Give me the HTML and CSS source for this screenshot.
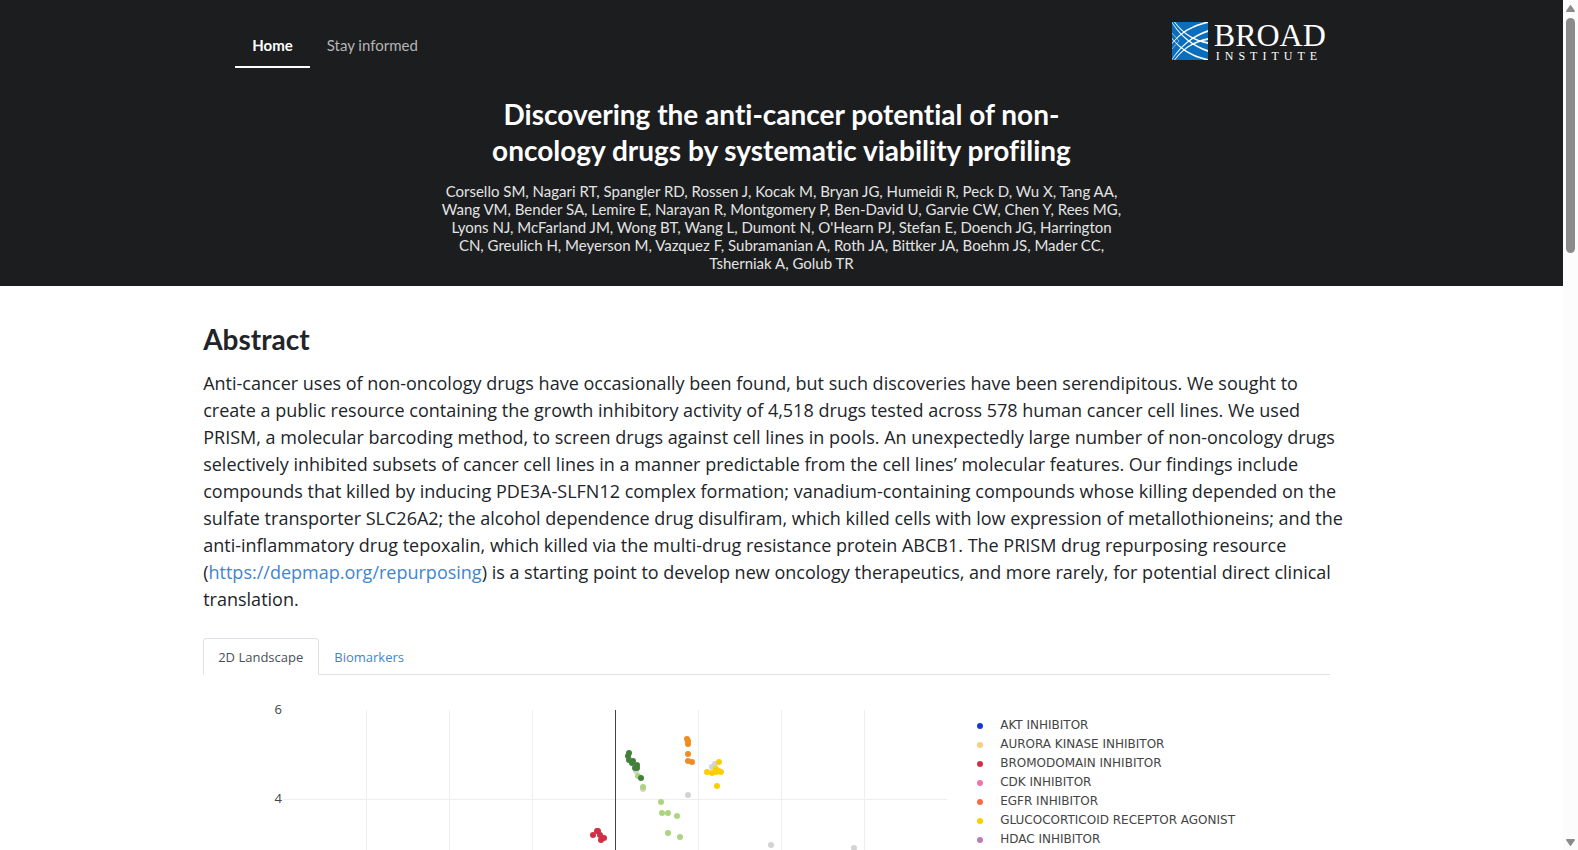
FILE: index.html
```html
<!DOCTYPE html>
<html lang="en">
<head>
    <meta charset="UTF-8">
    <title>Discovering the anti-cancer potential of non-oncology drugs</title>
    <link rel="stylesheet" href="styles.css">
</head>
<body>
    <div class="page">
        <header class="header">
            <div class="top-bar">
                <nav class="nav">
                    <a class="nav-link active" href="#">Home</a>
                    <a class="nav-link" href="#informed">Stay informed</a>
                </nav>
                <a class="logo" href="#" aria-label="Broad Institute">
                    <svg width="36" height="38" viewBox="0 0 36 38">
                        <rect width="36" height="38" fill="#0a6ebd"/>
                        <g fill="#fff">
                            <path d="M0 0Q14 21 36 28V30Q13 22 0 1Z"/>
                            <path d="M0 38Q14 17 36 10V8Q13 16 0 37Z"/>
                            <path d="M0 22Q13 6 36 1V0H33Q12 5 0 21Z"/>
                            <path d="M0 16Q13 32 36 37V38H33Q12 33 0 17Z"/>
                            <path d="M3 38Q16 21 36 18V16Q15 20 2 38Z"/>
                            <path d="M3 0Q16 17 36 20V22Q15 18 2 0Z"/>
                        </g>
                        <path d="M0 11L7 19L0 27" fill="none" stroke="#fff" opacity="0.5"/>
                    </svg>
                    <span class="logo-text">
                        <span class="logo-name">BROAD</span>
                        <span class="logo-sub">INSTITUTE</span>
                    </span>
                </a>
            </div>
            <div class="intro">
                <h1>Discovering the anti-cancer potential of non-oncology drugs by systematic viability profiling</h1>
                <p>
                    Corsello SM, Nagari RT, Spangler RD, Rossen J, Kocak M, Bryan JG, Humeidi R, Peck D, Wu X, Tang AA,<br>
                    Wang VM, Bender SA, Lemire E, Narayan R, Montgomery P, Ben-David U, Garvie CW, Chen Y, Rees MG,<br>
                    Lyons NJ, McFarland JM, Wong BT, Wang L, Dumont N, O'Hearn PJ, Stefan E, Doench JG, Harrington<br>
                    CN, Greulich H, Meyerson M, Vazquez F, Subramanian A, Roth JA, Bittker JA, Boehm JS, Mader CC,<br>
                    Tsherniak A, Golub TR
                </p>
            </div>
        </header>

        <main class="content">
            <h2>Abstract</h2>
            <p class="abstract">Anti-cancer uses of non-oncology drugs have occasionally been found, but such discoveries have been serendipitous. We sought to create a public resource containing the growth inhibitory activity of 4,518 drugs tested across 578 human cancer cell lines. We used PRISM, a molecular barcoding method, to screen drugs against cell lines in pools. An unexpectedly large number of non-oncology drugs selectively inhibited subsets of cancer cell lines in a manner predictable from the cell lines’ molecular features. Our findings include compounds that killed by inducing PDE3A-SLFN12 complex formation; vanadium-containing compounds whose killing depended on the sulfate transporter SLC26A2; the alcohol dependence drug disulfiram, which killed cells with low expression of metallothioneins; and the anti-inflammatory drug tepoxalin, which killed via the multi-drug resistance protein ABCB1. The PRISM drug repurposing resource (<a href="https://depmap.org/repurposing">https://depmap.org/repurposing</a>) is a starting point to develop new oncology therapeutics, and more rarely, for potential direct clinical translation.</p>

            <div class="tabs">
                <a class="tab active" href="#landscape">2D Landscape</a>
                <a class="tab" href="#biomarkers">Biomarkers</a>
            </div>

            <div class="chart" id="landscape">
                <svg class="plot" width="745" height="150" viewBox="0 0 745 150">
                    <!-- grid -->
                    <g stroke="#eee" shape-rendering="crispEdges">
                        <path d="M163.500 10V150M246.500 10V150M329.500 10V150M495.500 10V150M578.500 10V150M661.500 10V150"/>
                        <path d="M80 99.500H744"/>
                    </g>
                    <path d="M412.500 10V150" stroke="#444" shape-rendering="crispEdges"/>
                    <text class="tick" x="79" y="14">6</text>
                    <text class="tick" x="79" y="103">4</text>

                    <!-- other compounds -->
                    <g fill="#d3d3d3">
                        <circle cx="433" cy="71" r="3"/>
                        <circle cx="440" cy="89" r="3"/>
                        <circle cx="485" cy="95" r="3"/>
                        <circle cx="509" cy="67" r="3"/>
                        <circle cx="512" cy="64" r="3"/>
                        <circle cx="568" cy="145" r="3"/>
                        <circle cx="651" cy="148" r="3"/>
                    </g>
                    <g fill="#add57f">
                        <circle cx="435" cy="76" r="3"/>
                        <circle cx="440" cy="87" r="3"/>
                        <circle cx="458" cy="102" r="3"/>
                        <circle cx="459" cy="113" r="3"/>
                        <circle cx="465" cy="113" r="3"/>
                        <circle cx="474" cy="116" r="3"/>
                        <circle cx="465" cy="133" r="3"/>
                        <circle cx="477" cy="137" r="3"/>
                    </g>
                    <g fill="#43803b">
                        <circle cx="426" cy="53" r="3"/>
                        <circle cx="425" cy="56" r="3"/>
                        <circle cx="426" cy="60" r="3"/>
                        <circle cx="430" cy="61" r="3"/>
                        <circle cx="429" cy="63" r="3"/>
                        <circle cx="434" cy="65" r="3"/>
                        <circle cx="432" cy="68" r="3"/>
                        <circle cx="434" cy="68" r="3"/>
                        <circle cx="438" cy="78" r="3"/>
                    </g>
                    <g fill="#f08d22">
                        <circle cx="484" cy="39" r="3"/>
                        <circle cx="485" cy="41" r="3"/>
                        <circle cx="485" cy="44" r="3"/>
                        <circle cx="485" cy="54" r="3"/>
                        <circle cx="485" cy="61" r="3"/>
                        <circle cx="489" cy="62" r="3"/>
                    </g>
                    <g fill="#ffcd00">
                        <circle cx="516" cy="62" r="3"/>
                        <circle cx="504" cy="72" r="3"/>
                        <circle cx="509" cy="73" r="3"/>
                        <circle cx="513" cy="69" r="3"/>
                        <circle cx="513" cy="72" r="3"/>
                        <circle cx="516" cy="71" r="3"/>
                        <circle cx="518" cy="72" r="3"/>
                        <circle cx="514" cy="86" r="3"/>
                    </g>
                    <g fill="#d12f44">
                        <circle cx="390" cy="135" r="3"/>
                        <circle cx="394" cy="131" r="3"/>
                        <circle cx="395" cy="131" r="3"/>
                        <circle cx="397" cy="135" r="3"/>
                        <circle cx="398" cy="140" r="3"/>
                        <circle cx="401" cy="138" r="3"/>
                    </g>
                </svg>
                <ul class="legend">
                    <li class="akt">AKT INHIBITOR</li>
                    <li class="aurora">AURORA KINASE INHIBITOR</li>
                    <li class="bromodomain">BROMODOMAIN INHIBITOR</li>
                    <li class="cdk">CDK INHIBITOR</li>
                    <li class="egfr">EGFR INHIBITOR</li>
                    <li class="glucocorticoid">GLUCOCORTICOID RECEPTOR AGONIST</li>
                    <li class="hdac">HDAC INHIBITOR</li>
                </ul>
            </div>
        </main>
    </div>

    <div class="scrollbar">
        <svg width="9" height="7" viewBox="0 0 9 7"><path d="M4.500 0Q5 0 5.500 1L9 6Q9 7 8 7H1Q0 7 0 6L3.500 1Q4 0 4.500 0Z"/></svg>
        <div class="thumb"></div>
        <svg width="9" height="7" viewBox="0 0 9 7"><path d="M4.500 7Q5 7 5.500 6L9 1Q9 0 8 0H1Q0 0 0 1L3.500 6Q4 7 4.500 7Z"/></svg>
    </div>
</body>
</html>
```

FILE: styles.css
```css
body {
    display: flex;
    height: 100vh;
    margin: 0;
    overflow: hidden;
    background-color: #fff;
    color: #212529;
    font-family: "Open Sans", "Noto Sans", sans-serif;
}
.page {
    flex: 1;
    overflow: hidden;
}
a {
    color: #4285cd;
    text-decoration: none;
}

/* header */
.header {
    background-color: #1c1d1f;
    color: #fff;
    font-family: Lato, sans-serif;
    padding-bottom: 14px;
}
.top-bar {
    display: flex;
    justify-content: space-between;
    align-items: flex-start;
    box-sizing: border-box;
    width: 74%;
    margin: 0 auto;
    padding: 22px 34px 0 32px;
}
.nav {
    display: flex;
    padding-top: 2px;
}
.nav-link {
    padding: 12px 17px;
    border-bottom: 2px solid transparent;
    color: #b5b5b6;
    font-size: 15px;
    line-height: 18px;
}
.nav-link.active {
    border-color: #fff;
    color: #fff;
    font-weight: bold;
}
.logo {
    display: flex;
    gap: 6px;
    color: #fff;
    font-family: "Liberation Serif", serif;
}
.logo-text {
    display: flex;
    flex-direction: column;
}
.logo-name {
    font-size: 32px;
    line-height: 26px;
}
.logo-sub {
    padding-left: 2px;
    font-size: 12px;
    line-height: 16px;
    letter-spacing: 5px;
}
.intro {
    max-width: 720px;
    margin: 0 auto;
    padding-top: 28px;
    text-align: center;
}
.intro h1 {
    max-width: 600px;
    margin: 0 auto 14px;
    font-size: 28px;
    font-variant-ligatures: none;
    line-height: 36px;
}
.intro p {
    margin: 0;
    color: #e3e3e3;
    font-size: 15px;
    line-height: 18px;
}

/* abstract */
.content {
    box-sizing: border-box;
    width: 74%;
    margin: 0 auto;
    padding: 35px 15px 0 0;
}
.content h2 {
    margin: 0 0 13px;
    font-family: Lato, sans-serif;
    font-size: 28px;
    line-height: 36px;
}
.abstract {
    margin: 0 0 25px;
    font-size: 18px;
    line-height: 27px;
}

/* tabs */
.tabs {
    display: flex;
    margin-right: 15px;
    border-bottom: 1px solid #dee2e6;
}
.tab {
    margin-bottom: -1px;
    padding: 9px 15px 7px 14px;
    border: 1px solid transparent;
    border-radius: 4px 4px 0 0;
    font-size: 13px;
    line-height: 19px;
}
.tab.active {
    border-color: #dee2e6 #dee2e6 #fff;
    background-color: #fff;
    color: #495057;
}

/* chart */
.chart {
    display: flex;
    gap: 29px;
    padding-top: 25px;
}
.plot {
    flex: none;
}
.tick {
    fill: #444;
    font-size: 13px;
    text-anchor: end;
}
.legend {
    margin: 0;
    padding: 16px 0 0;
    list-style: none;
    color: #444;
    font-family: "DejaVu Sans", sans-serif;
    font-size: 12px;
    line-height: 19px;
    white-space: nowrap;
}
.legend li {
    display: flex;
    align-items: center;
    gap: 17px;
}
.legend li::before {
    content: "";
    width: 6px;
    height: 6px;
    border-radius: 50%;
}
.akt::before { background-color: #1437db; }
.aurora::before { background-color: #f9cf7e; }
.bromodomain::before { background-color: #d12f44; }
.cdk::before { background-color: #ee76ad; }
.egfr::before { background-color: #fb6b42; }
.glucocorticoid::before { background-color: #ffcd00; }
.hdac::before { background-color: #b97db9; }

/* scrollbar */
.scrollbar {
    display: flex;
    flex-direction: column;
    align-items: center;
    box-sizing: border-box;
    width: 15px;
    padding: 5px 0 4px;
    background-color: #fcfcfc;
    fill: #8b8b8b;
}
.thumb {
    width: 9px;
    height: 28%;
    margin: 6px 0 auto;
    border-radius: 5px;
    background-color: #8b8b8b;
}
```
